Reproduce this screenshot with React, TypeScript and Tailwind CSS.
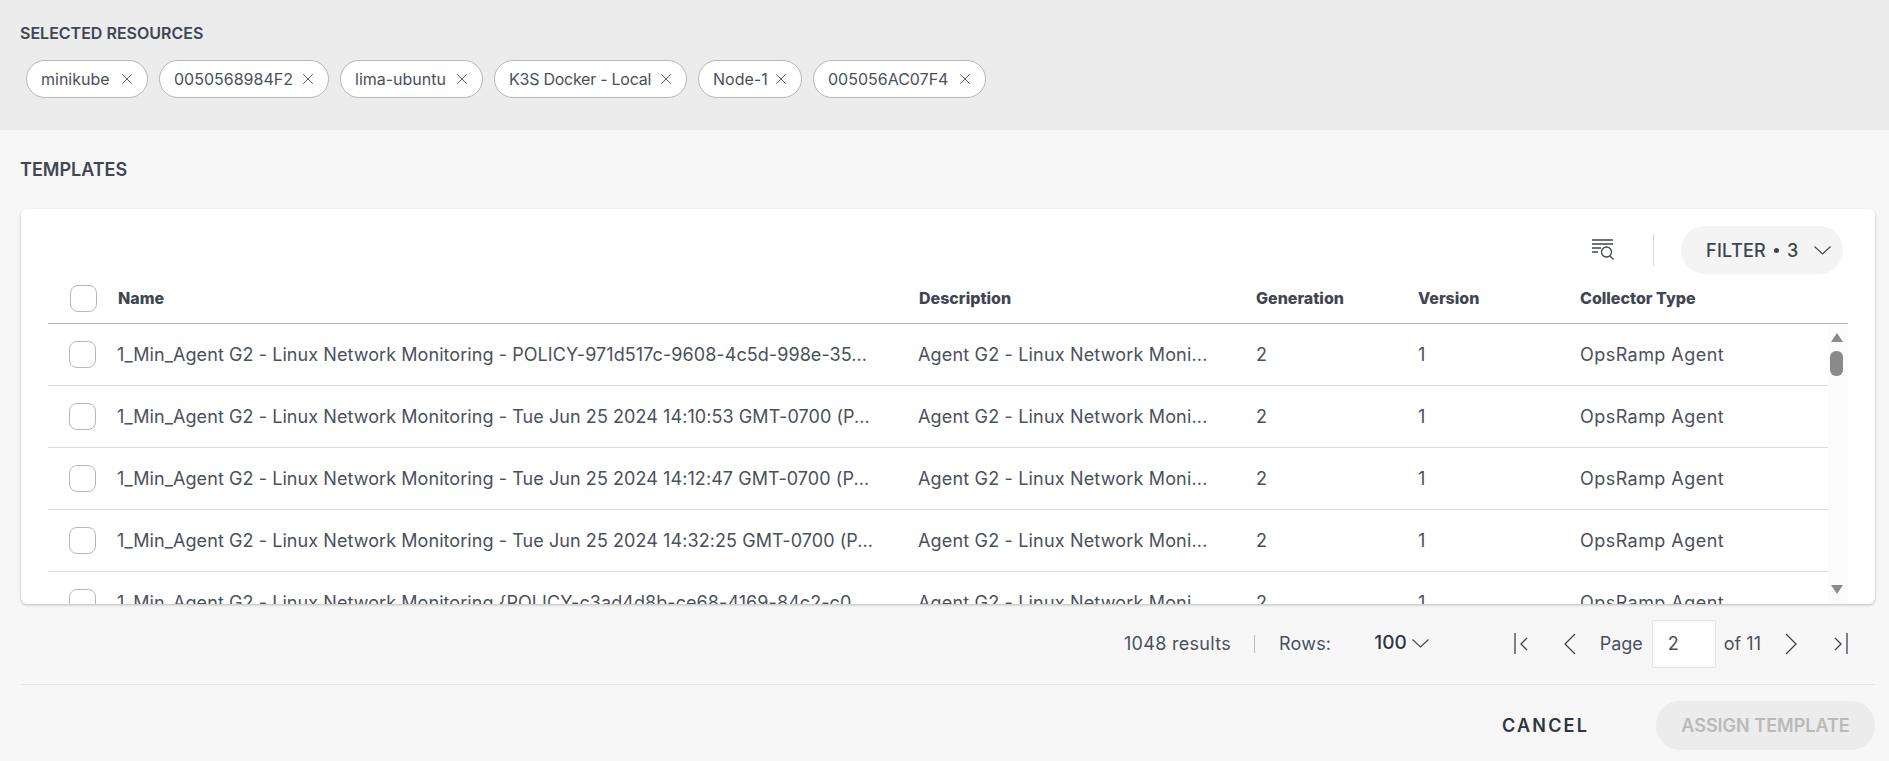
import { X } from "lucide-react";

const chips = [
  { label: "minikube", width: "w-[122px]", text: "" },
  { label: "0050568984F2", width: "w-[170px]", text: "" },
  { label: "lima-ubuntu", width: "w-[143px]", text: "" },
  { label: "K3S Docker - Local", width: "w-[193px]", text: "tracking-[-0.25px]" },
  { label: "Node-1", width: "w-[104px]", text: "" },
  { label: "005056AC07F4", width: "w-[173px]", text: "" },
];

const prefix = "1_Min_Agent G2 - Linux Network Monitoring ";
const rows = [
  prefix + "- POLICY-971d517c-9608-4c5d-998e-35...",
  prefix + "- Tue Jun 25 2024 14:10:53 GMT-0700 (P...",
  prefix + "- Tue Jun 25 2024 14:12:47 GMT-0700 (P...",
  prefix + "- Tue Jun 25 2024 14:32:25 GMT-0700 (P...",
  prefix + "{POLICY-c3ad4d8b-ce68-4169-84c2-c0...",
];

function Checkbox() {
  return <div className="h-[27px] w-[27px] shrink-0 rounded-lg border border-[#b4b8bc] bg-white" />;
}

function Chevron() {
  return (
    <svg width="17" height="9" viewBox="0 0 17 9" fill="none" stroke="#3f4450" strokeWidth="1.1">
      <path d="M0.5 0.5l8 7.5 8-7.5" />
    </svg>
  );
}

function PageIcon({ d, width }: { d: string; width: number }) {
  return (
    <svg width={width} height="22" viewBox={`0 0 ${width} 22`} fill="none" stroke="#3f4450" strokeWidth="1.3">
      <path d={d} />
    </svg>
  );
}

export default function App() {
  return (
    <div className="flex h-[761px] flex-col overflow-hidden bg-[#f7f7f7] font-['Inter',sans-serif] text-[#4a505c]">
      <section className="h-[130px] shrink-0 bg-[#ececec] pl-[20px] pt-[24px]">
        <h2 className="text-[16px] leading-[18px] font-semibold text-[#414652]">SELECTED RESOURCES</h2>
        <div className="mt-[18px] ml-[6px] flex gap-[11px]">
          {chips.map((chip) => (
            <div
              key={chip.label}
              className={`flex h-[38px] items-center justify-between rounded-[19px] border border-[#b4b8bc] bg-white pl-[14px] pr-[11px] text-[16px] text-[#4a505b] ${chip.width}`}
            >
              <span className={chip.text}>{chip.label}</span>
              <X size={18} strokeWidth={1.2} />
            </div>
          ))}
        </div>
      </section>

      <section className="flex flex-1 flex-col pl-[20px]">
        <h2 className="mt-[28px] text-[18px] leading-[24px] font-semibold text-[#414652]">TEMPLATES</h2>

        <div className="mt-[27px] ml-[1px] flex h-[395px] w-[1854px] shrink-0 flex-col overflow-hidden rounded-md bg-white pl-[27px] pr-[27px] shadow-[0_1px_3px_rgba(0,0,0,0.25)]">
          <div className="flex h-[65px] shrink-0 items-end justify-end pr-[5px]">
            <div className="flex items-center">
              <svg width="24" height="24" viewBox="0 0 24 24" fill="none" stroke="#3f4450" strokeWidth="1.3">
                <path d="M1 2h21M1 6h21M1 10h9M1 14h6" />
                <circle cx="15.5" cy="14" r="5" />
                <path d="M19 18l3.5 3.5" />
              </svg>
              <div className="ml-[38px] mr-[27px] h-[32px] w-px bg-[#d5d7d9]" />
              <div className="flex h-[48px] w-[162px] items-center rounded-3xl bg-[#f4f4f4] pl-[25px] text-[18px] font-medium tracking-[0.3px] text-[#3f4450]">
                <span>FILTER</span>
                <span className="mx-[8px] h-[5px] w-[5px] rounded-full bg-[#3f4450]" />
                <span>3</span>
                <span className="ml-[15px]">
                  <Chevron />
                </span>
              </div>
            </div>
          </div>

          <div className="flex h-[50px] shrink-0 items-center border-b border-[#b4b6b8] pb-[1px] pl-[22px] text-[16px] font-extrabold text-[#414652]">
            <Checkbox />
            <span className="ml-[21px] w-[801px]">Name</span>
            <span className="w-[337px]">Description</span>
            <span className="w-[162px]">Generation</span>
            <span className="w-[162px]">Version</span>
            <span>Collector Type</span>
          </div>

          <div className="flex min-h-0 flex-1">
            <div className="min-w-0 flex-1 overflow-hidden">
              {rows.map((name) => (
                <div key={name} className="flex h-[62px] shrink-0 items-center border-b border-[#dcdedf] pl-[21px] text-[18px] whitespace-nowrap">
                  <Checkbox />
                  <span className="ml-[21px] w-[801px] tracking-[0.07px]">{name}</span>
                  <span className="w-[338px] tracking-[0.17px]">Agent G2 - Linux Network Moni...</span>
                  <span className="w-[162px]">2</span>
                  <span className="w-[162px]">1</span>
                  <span className="tracking-[0.45px]">OpsRamp Agent</span>
                </div>
              ))}
            </div>
            <div className="flex w-[20px] shrink-0 flex-col items-center bg-[#fbfbfb] pr-[3px] pt-[9px]">
              <div className="h-0 w-0 border-x-[6px] border-b-[9px] border-x-transparent border-b-[#8a8a8a]" />
              <div className="mt-[9px] h-[25px] w-[13px] rounded-md bg-[#8a8a8a]" />
              <div className="mt-auto mb-[10px] h-0 w-0 border-x-[6px] border-t-[9px] border-x-transparent border-t-[#8a8a8a]" />
            </div>
          </div>
        </div>

        <div className="ml-[1px] flex h-[81px] w-[1854px] shrink-0 items-center border-b border-[#e5e6e7] pb-[1px] text-[18px]">
          <div className="ml-auto flex items-center">
            <span className="tracking-[0.3px]">1048 results</span>
            <div className="ml-[23px] mr-[24px] h-[18px] w-px bg-[#b9bcc0]" />
            <span className="tracking-[0.2px]">Rows:</span>
            <span className="ml-[43px] text-[19px] font-medium text-[#2f3440]">100</span>
            <span className="ml-[5px]">
              <Chevron />
            </span>
            <div className="ml-[85px] flex items-center">
              <PageIcon width={14} d="M1 0v21M13 5l-6 6 6 6" />
            </div>
            <div className="ml-[35px] flex items-center">
              <PageIcon width={13} d="M12 1L2 11l10 10" />
            </div>
            <span className="ml-[24px]">Page</span>
            <div className="ml-[9px] flex h-[48px] w-[64px] items-center border border-[#e5e6e7] bg-white pl-[15px]">2</div>
            <span className="ml-[8px]">of 11</span>
            <div className="ml-[24px] flex items-center">
              <PageIcon width={13} d="M1 1l10 10L1 21" />
            </div>
            <div className="ml-[36px] mr-[27px] flex items-center">
              <PageIcon width={14} d="M1 5l6 6-6 6M13 0v21" />
            </div>
          </div>
        </div>

        <div className="ml-[1px] flex w-[1854px] items-center justify-end pt-[16px]">
          <span className="text-[18px] font-semibold tracking-[0.12em] text-[#2f3440]">CANCEL</span>
          <div className="ml-[67px] flex h-[49px] w-[219px] items-center justify-center rounded-3xl bg-[#ececec] text-[18px] font-semibold text-[#b9b9b9]">
            ASSIGN TEMPLATE
          </div>
        </div>
      </section>
    </div>
  );
}
